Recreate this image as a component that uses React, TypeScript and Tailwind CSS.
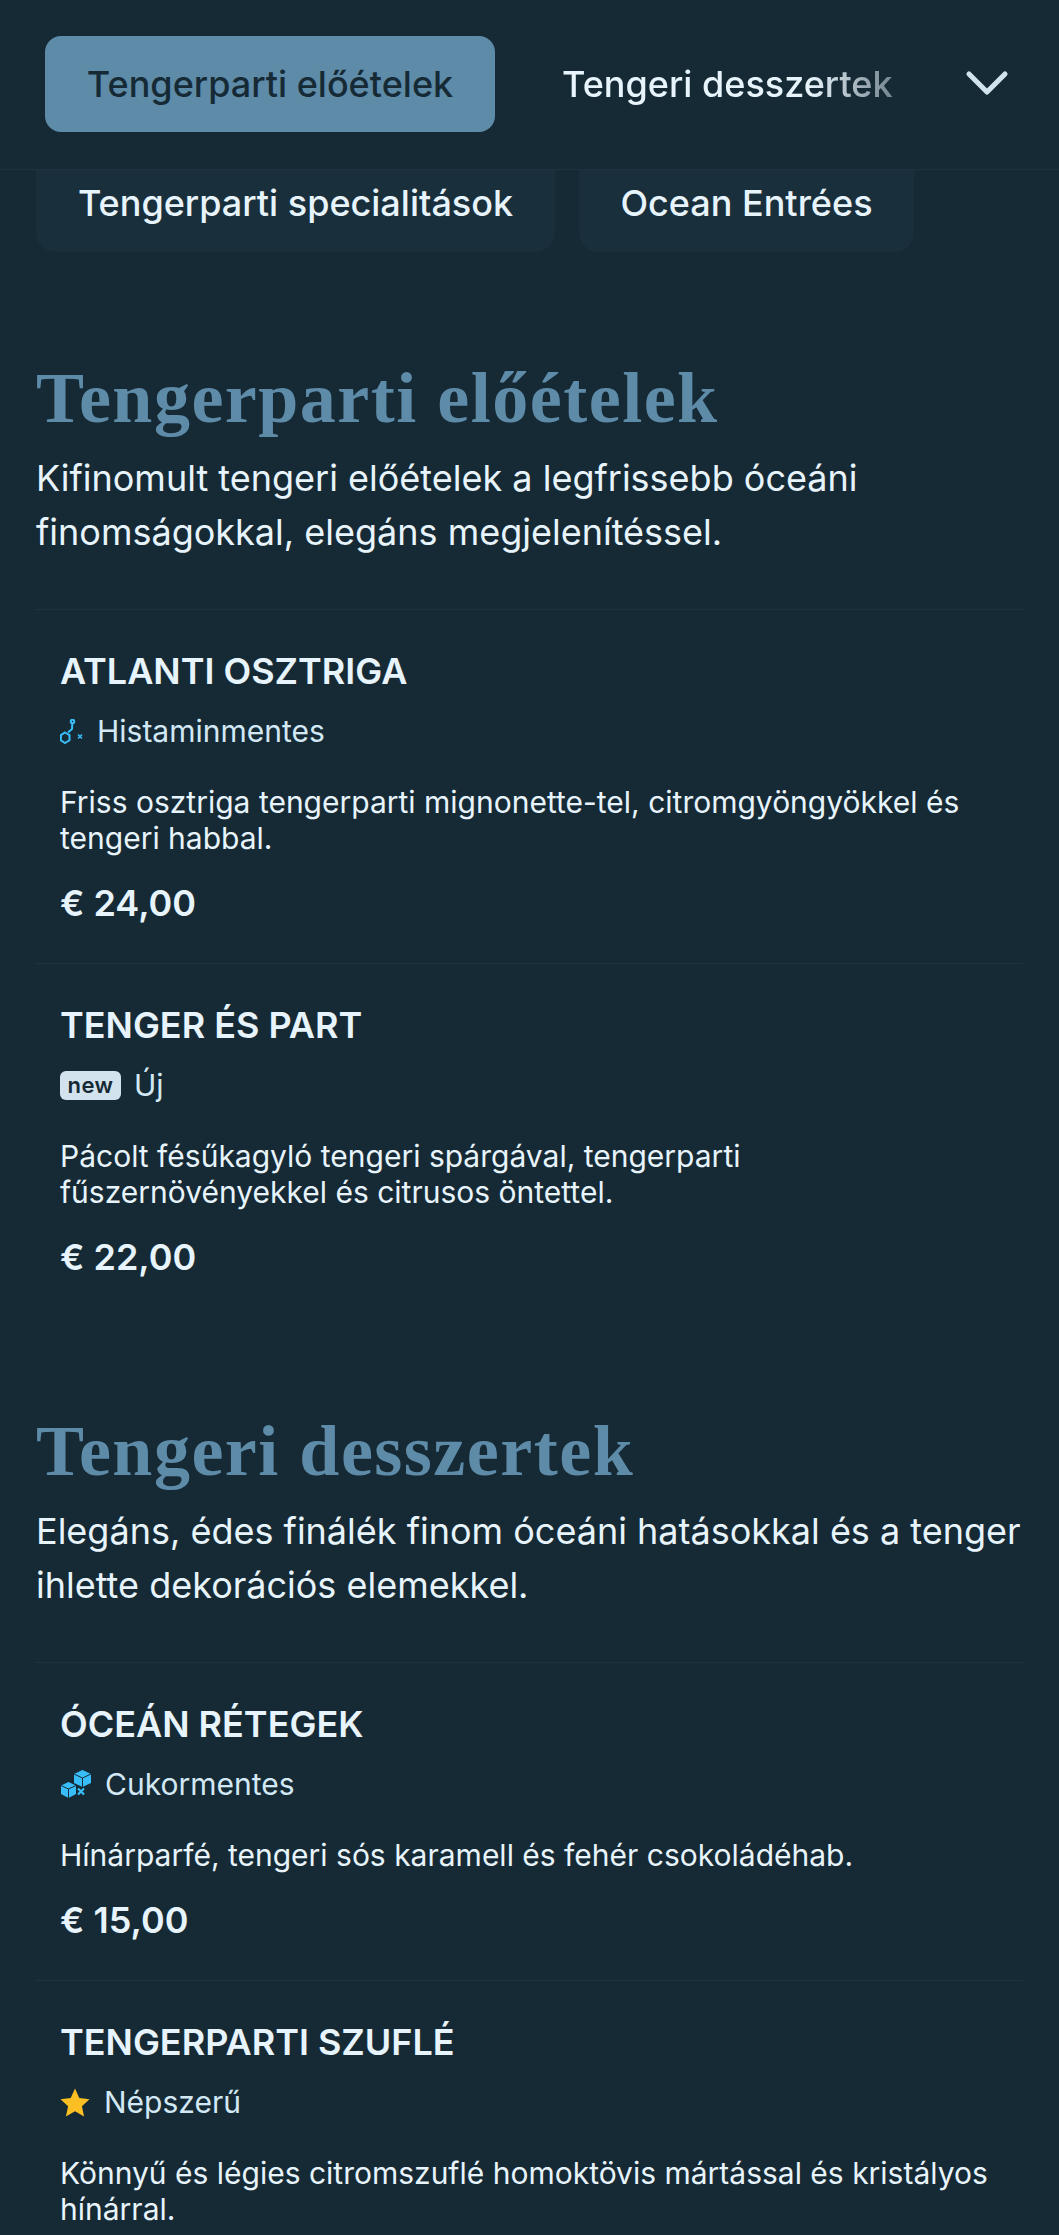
import { ChevronDown } from "lucide-react";
import type { ReactNode } from "react";

function MoleculeIcon() {
  return (
    <svg viewBox="0 0 25 25" className="h-[25px] w-[25px]" fill="none" stroke="#38bdf8" strokeWidth="2">
      <circle cx="12.500" cy="2.500" r="1.800" />
      <path d="M12.300 4.500 12 10 8 13.500" />
      <path d="M5 13.500l4.500 2.600v5.200L5 24 .9 21.300v-5.200Z" />
      <path d="M18 15.500l4 4M22 15.500l-4 4" strokeWidth="1.600" />
    </svg>
  );
}

function CubesIcon() {
  return (
    <svg viewBox="0 0 32 28" className="h-[28px] w-[32px]">
      <path d="M22.500 0 31 4v9l-8.500 4L14 13V4Z" fill="#38bdf8" />
      <path d="M14 4l8.500 4L31 4M22.500 8v9" fill="none" stroke="#182b37" strokeWidth="1" />
      <path d="M8.500 12 16 15.500V24l-7.500 4L1 24v-8.500Z" fill="#38bdf8" />
      <path d="M1 15.500l7.500 3.500 7.500-3.500M8.500 19v9" fill="none" stroke="#182b37" strokeWidth="1" />
      <path d="M18 18.500l6 6M24 18.500l-6 6" stroke="#38bdf8" strokeWidth="2.200" />
    </svg>
  );
}

function StarIcon() {
  return (
    <svg viewBox="0 0 30 29" className="h-[29px] w-[30px]">
      <path d="M15 0.500l4.300 9.500 10.200 1.200-7.600 7 2.200 10.300-9.100-5.300-9.100 5.300 2.200-10.300-7.600-7 10.200-1.200Z" fill="#fbbf24" />
    </svg>
  );
}

function NewBadge() {
  return (
    <span className="flex h-[29px] w-[61px] items-center justify-center rounded-[6px] bg-[#d3e3ed] text-[22px] font-semibold leading-none tracking-[0.5px] text-[#162a36]">
      new
    </span>
  );
}

type Dish = {
  name: string;
  icon: ReactNode;
  tag: string;
  desc: ReactNode;
  price?: string;
  gap: string;
};

function DishRow({ dish, last }: { dish: Dish; last?: boolean }) {
  return (
    <div className={`px-[24px] pt-[41px] pb-[39px] ${last ? "" : "border-b border-[#1e323f]"}`}>
      <h3 className="text-[36px] leading-[40px] font-semibold text-[#e8f4fb]">{dish.name}</h3>
      <div className={`mt-[20px] flex h-[40px] items-center ${dish.gap} text-[30px] text-[#d3e8f5]`}>
        {dish.icon}
        <span>{dish.tag}</span>
      </div>
      <p className="mt-[33px] text-[30px] leading-[36px] text-[#e8f4fb]">{dish.desc}</p>
      {dish.price && <p className="mt-[26px] text-[36px] leading-[42px] font-semibold text-[#e8f4fb]">{dish.price}</p>}
    </div>
  );
}

function Section({ title, lines, dishes }: { title: string; lines: ReactNode; dishes: Dish[] }) {
  return (
    <section className="px-[36px]">
      <h2 className="text-[72px] leading-[80px] font-bold tracking-[1.500px] text-[#5e8ba8] [font-family:'Liberation_Serif',serif]">{title}</h2>
      <p className="mt-[13px] text-[36px] leading-[54px] text-[#e8f4fb]">{lines}</p>
      <div className="mt-[50px] border-t border-[#1e323f]">
        {dishes.map((d, i) => (
          <DishRow key={d.name} dish={d} last={i === dishes.length - 1} />
        ))}
      </div>
    </section>
  );
}

const starters: Dish[] = [
  {
    name: "ATLANTI OSZTRIGA",
    icon: <MoleculeIcon />,
    tag: "Histaminmentes",
    gap: "gap-[12px]",
    desc: (
      <>
        Friss osztriga tengerparti mignonette-tel, citromgyöngyökkel és
        <br />
        tengeri habbal.
      </>
    ),
    price: "€ 24,00",
  },
  {
    name: "TENGER ÉS PART",
    icon: <NewBadge />,
    tag: "Új",
    gap: "gap-[13px]",
    desc: (
      <>
        Pácolt fésűkagyló tengeri spárgával, tengerparti
        <br />
        fűszernövényekkel és citrusos öntettel.
      </>
    ),
    price: "€ 22,00",
  },
];

const desserts: Dish[] = [
  {
    name: "ÓCEÁN RÉTEGEK",
    icon: <CubesIcon />,
    tag: "Cukormentes",
    gap: "gap-[13px]",
    desc: "Hínárparfé, tengeri sós karamell és fehér csokoládéhab.",
    price: "€ 15,00",
  },
  {
    name: "TENGERPARTI SZUFLÉ",
    icon: <StarIcon />,
    tag: "Népszerű",
    gap: "gap-[14px]",
    desc: (
      <>
        Könnyű és légies citromszuflé homoktövis mártással és kristályos
        <br />
        hínárral.
      </>
    ),
  },
];

export default function App() {
  return (
    <div className="h-[2235px] w-[1059px] overflow-hidden bg-[#162a36] [font-family:Inter,sans-serif]">
      <header className="flex h-[170px] items-start border-b border-[#1e323f] pt-[36px] pl-[45px]">
        <div className="flex h-[96px] w-[450px] items-center justify-center rounded-[16px] bg-[#5e8ba8] text-[36px] font-medium text-[#162a36]">
          Tengerparti előételek
        </div>
        <div className="ml-[67px] flex h-[96px] w-[332px] items-center overflow-hidden whitespace-nowrap text-[36px] font-medium text-[#e8f4fb] [mask-image:linear-gradient(to_right,black_75%,transparent_120%)]">
          Tengeri desszertek
        </div>
        <ChevronDown className="mt-[11px] ml-[57px] h-[72px] w-[72px] shrink-0 text-[#d3e3ed]" strokeWidth={1.700} />
      </header>

      <div className="flex gap-[24px] pl-[36px]">
        <div className="flex h-[82px] w-[519px] items-center justify-center rounded-b-[20px] bg-[#1a2f3c] pb-[16px] text-[36px] font-medium text-[#e8f4fb]">
          Tengerparti specialitások
        </div>
        <div className="flex h-[82px] w-[335px] items-center justify-center rounded-b-[20px] bg-[#1a2f3c] pb-[16px] text-[36px] font-medium text-[#e8f4fb]">
          Ocean Entrées
        </div>
      </div>

      <div className="mt-[106px]">
        <Section
          title="Tengerparti előételek"
          lines={
            <>
              Kifinomult tengeri előételek a legfrissebb óceáni
              <br />
              finomságokkal, elegáns megjelenítéssel.
            </>
          }
          dishes={starters}
        />
      </div>
      <div className="mt-[94px]">
        <Section
          title="Tengeri desszertek"
          lines={
            <>
              Elegáns, édes finálék finom óceáni hatásokkal és a tenger
              <br />
              ihlette dekorációs elemekkel.
            </>
          }
          dishes={desserts}
        />
      </div>
    </div>
  );
}
